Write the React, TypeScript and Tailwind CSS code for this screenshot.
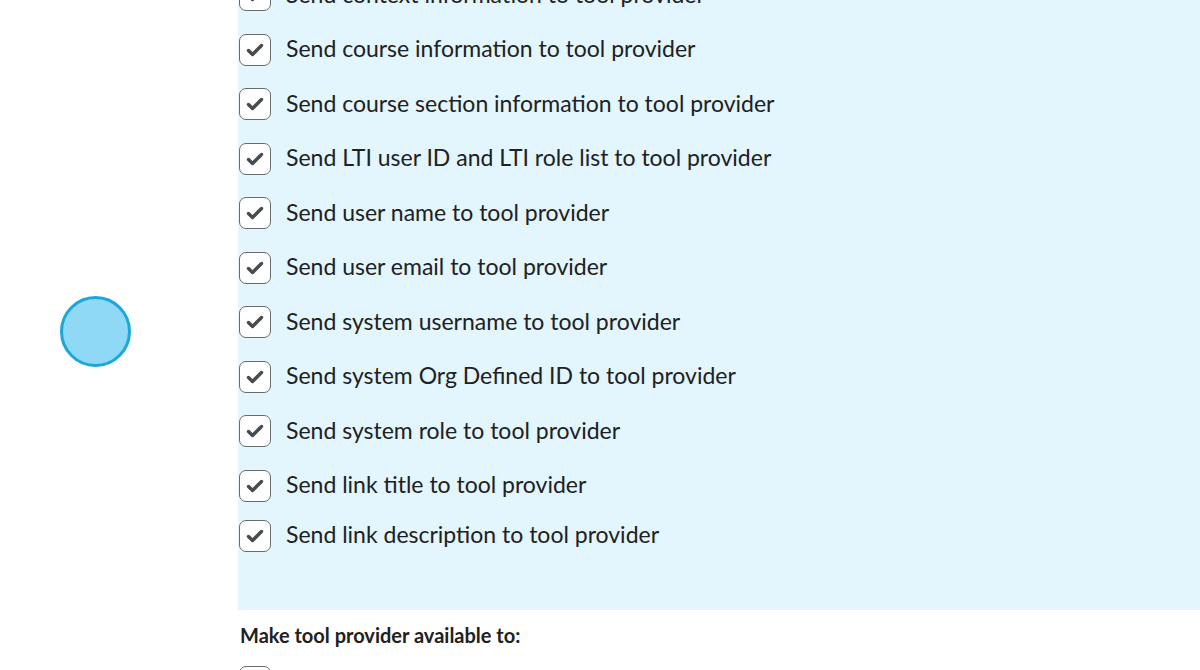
import React from 'react';

const sendOptions = [
  'Send context information to tool provider',
  'Send course information to tool provider',
  'Send course section information to tool provider',
  'Send LTI user ID and LTI role list to tool provider',
  'Send user name to tool provider',
  'Send user email to tool provider',
  'Send system username to tool provider',
  'Send system Org Defined ID to tool provider',
  'Send system role to tool provider',
  'Send link title to tool provider',
  'Send link description to tool provider',
];

function CheckBox({ checked = true }: { checked?: boolean }) {
  return (
    <span className="flex h-8 w-8 shrink-0 items-center justify-center rounded-[7px] border-[1.5px] border-[#666b6e] bg-white">
      {checked && (
        <svg width="20" height="20" viewBox="0 0 20 20" fill="none">
          <path
            d="M3.5 10.5l4 4L16.5 5.5"
            stroke="#494c4e"
            strokeWidth="3.4"
            strokeLinecap="round"
            strokeLinejoin="round"
          />
        </svg>
      )}
    </span>
  );
}

export default function App() {
  return (
    <main
      className="relative h-[670px] w-[1200px] overflow-hidden bg-white text-[#202122]"
      style={{ fontFamily: 'Lato, "Open Sans", sans-serif' }}
    >
      {/* highlight pointer */}
      <div className="absolute left-[60px] top-[296px] h-[71px] w-[71px] rounded-full border-[3px] border-[#1aa7da] bg-[#8fd8f6]" />

      <div className="ml-[238px] -mt-[32px]">
        {/* options panel */}
        <section className="bg-[#e3f5fd] pb-[47px] pl-px">
          {sendOptions.map((label, i) => (
            <label
              key={label}
              className={`flex h-[54.5px] items-center gap-[15px] ${i === sendOptions.length - 1 ? '-mt-[4.5px]' : ''}`}
            >
              <CheckBox />
              <span className="-mt-[2px] text-[23px] leading-none">{label}</span>
            </label>
          ))}
        </section>

        <h3 className="mt-[13px] pl-[2px] text-[20px] font-bold leading-[24px]">
          Make tool provider available to:
        </h3>

        <label className="mt-[19px] flex items-center gap-[15px] pl-px">
          <CheckBox checked={false} />
          <span className="-mt-[2px] text-[23px] leading-none">Current org unit and all its descendants</span>
        </label>
      </div>
    </main>
  );
}
